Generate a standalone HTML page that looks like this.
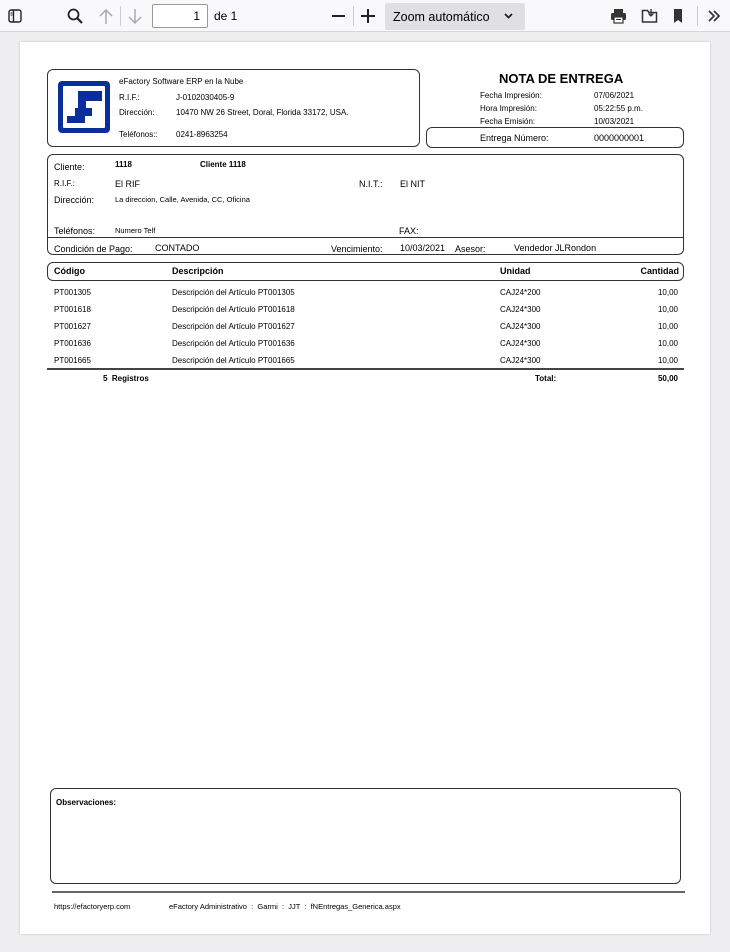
<!DOCTYPE html>
<html><head><meta charset="utf-8"><style>
*{margin:0;padding:0;box-sizing:border-box}
body{width:730px;height:952px;background:#eeeef0;font-family:"Liberation Sans",sans-serif;position:relative;overflow:hidden;color:#000}
.tb{position:absolute;left:0;top:0;width:730px;height:32px;background:#f9f9fb;border-bottom:1px solid #d6d6d8}
.a{position:absolute;white-space:nowrap}
.page{position:absolute;left:20px;top:42px;width:690px;height:892px;background:#fff;box-shadow:0 0 2px rgba(0,0,0,.2)}
.box{position:absolute;border:1.3px solid #333;border-radius:6px}
.s{font-size:8px}
.m{font-size:9px}
.b{font-weight:bold}
.r{text-align:right}
</style></head><body>
<div class="tb">
<svg class="a" style="left:8px;top:9px" width="14" height="14" viewBox="0 0 14 14"><rect x="1" y="1" width="12" height="12" rx="2" fill="none" stroke="#222" stroke-width="1.4"/><line x1="5.5" y1="1" x2="5.5" y2="13" stroke="#222" stroke-width="1.4"/><line x1="2.5" y1="4" x2="4.5" y2="4" stroke="#222"/><line x1="2.5" y1="6" x2="4.5" y2="6" stroke="#222"/></svg>
<svg class="a" style="left:67px;top:8px" width="17" height="17" viewBox="0 0 17 17"><circle cx="6.5" cy="6.5" r="5" fill="none" stroke="#222" stroke-width="1.8"/><line x1="10" y1="10" x2="15" y2="15" stroke="#222" stroke-width="2.2"/></svg>
<svg class="a" style="left:98px;top:8px" width="16" height="17" viewBox="0 0 16 17"><path d="M8 2v14M2 8l6-6 6 6" fill="none" stroke="#aaa" stroke-width="1.5"/></svg>
<div class="a" style="left:120px;top:6px;width:1px;height:20px;background:#ccc"></div>
<svg class="a" style="left:127px;top:8px" width="16" height="17" viewBox="0 0 16 17"><path d="M8 1v14M2 9l6 6 6-6" fill="none" stroke="#aaa" stroke-width="1.5"/></svg>
<div class="a" style="left:152px;top:4px;width:56px;height:24px;background:#fff;border:1px solid #999;border-radius:2px;font-size:12px;text-align:right;padding:4px 7px 0 0">1</div>
<div class="a" style="left:214px;top:9px;font-size:12px">de 1</div>
<div class="a" style="left:332px;top:15px;width:13px;height:2px;background:#222"></div>
<div class="a" style="left:353px;top:6px;width:1px;height:20px;background:#ccc"></div>
<div class="a" style="left:361px;top:15px;width:14px;height:2px;background:#222"></div>
<div class="a" style="left:367px;top:9px;width:2px;height:14px;background:#222"></div>
<div class="a" style="left:385px;top:3px;width:140px;height:27px;background:#e0e0e3;border-radius:2px;font-size:12.5px;padding:7px 0 0 8px">Zoom automático</div>
<svg class="a" style="left:504px;top:13px" width="9" height="7" viewBox="0 0 9 7"><path d="M1 1l3.5 3.5L8 1" fill="none" stroke="#222" stroke-width="1.8"/></svg>
<svg class="a" style="left:610px;top:8px" width="17" height="16" viewBox="0 0 17 16"><rect x="4" y="1" width="9" height="4" fill="#333"/><rect x="1" y="5" width="15" height="7" rx="1.5" fill="#333"/><rect x="4" y="9" width="9" height="6" fill="#fff" stroke="#333" stroke-width="1.2"/><line x1="6" y1="11.5" x2="11" y2="11.5" stroke="#333"/></svg>
<svg class="a" style="left:641px;top:7px" width="17" height="17" viewBox="0 0 17 17"><path d="M1.5 3.5h5l1.5 2h7.5v9.5h-14z" fill="none" stroke="#333" stroke-width="1.5"/><path d="M10 2v7M7.5 6.5l2.5 2.5 2.5-2.5" fill="none" stroke="#333" stroke-width="1.3"/></svg>
<svg class="a" style="left:673px;top:8px" width="10" height="16" viewBox="0 0 10 16"><path d="M1 1h8v14l-4-3-4 3z" fill="#333"/></svg>
<div class="a" style="left:697px;top:6px;width:1px;height:20px;background:#ccc"></div>
<svg class="a" style="left:707px;top:9px" width="14" height="14" viewBox="0 0 14 14"><path d="M2 2l5 5-5 5M7 2l5 5-5 5" fill="none" stroke="#333" stroke-width="1.7"/></svg>
</div>
<div class="page"></div>

<div class="box" style="left:47px;top:69px;width:373px;height:78px"></div>
<svg class="a" style="left:57px;top:80px" width="54" height="54" viewBox="0 0 54 54"><rect x="1" y="1" width="52" height="52" rx="4" fill="#0b2f9a"/><rect x="6" y="6" width="42" height="42" rx="1" fill="#fff"/><path d="M21 11h24v10H29v7h6v8H28v7H10v-7h8v-8h3z" fill="#0b2f9a"/></svg>
<div class="a s" style="left:119px;top:77px">eFactory Software ERP en la Nube</div>
<div class="a s" style="left:119px;top:93px">R.I.F.:</div><div class="a s" style="left:176px;top:93px">J-0102030405-9</div>
<div class="a s" style="left:119px;top:108px">Dirección:</div><div class="a s" style="left:176px;top:108px">10470 NW 26 Street, Doral, Florida 33172, USA.</div>
<div class="a s" style="left:119px;top:130px">Teléfonos::</div><div class="a s" style="left:176px;top:130px">0241-8963254</div>

<div class="a b" style="left:499px;top:71px;font-size:13px">NOTA DE ENTREGA</div>
<div class="a s" style="left:480px;top:91px">Fecha Impresión:</div><div class="a s" style="left:594px;top:91px">07/06/2021</div>
<div class="a s" style="left:480px;top:104px">Hora Impresión:</div><div class="a s" style="left:594px;top:104px">05:22:55 p.m.</div>
<div class="a s" style="left:480px;top:117px">Fecha Emisión:</div><div class="a s" style="left:594px;top:117px">10/03/2021</div>
<div class="box" style="left:426px;top:127px;width:258px;height:21px"></div>
<div class="a m" style="left:480px;top:133px">Entrega Número:</div><div class="a m" style="left:594px;top:133px">0000000001</div>

<div class="box" style="left:47px;top:154px;width:637px;height:101px"></div>
<div class="a" style="left:47px;top:237px;width:637px;height:1.3px;background:#333"></div>
<div class="a m" style="left:54px;top:162px">Cliente:</div>
<div class="a s b" style="left:115px;top:160px">1118</div><div class="a s b" style="left:200px;top:160px">Cliente 1118</div>
<div class="a s" style="left:54px;top:179px">R.I.F.:</div><div class="a m" style="left:115px;top:179px">El RIF</div>
<div class="a m" style="left:359px;top:179px">N.I.T.:</div><div class="a m" style="left:400px;top:179px">El NIT</div>
<div class="a m" style="left:54px;top:195px">Dirección:</div><div class="a" style="left:115px;top:195px;font-size:7.5px">La direccion, Calle, Avenida, CC, Oficina</div>
<div class="a m" style="left:54px;top:226px">Teléfonos:</div><div class="a" style="left:115px;top:226px;font-size:7.5px">Numero Telf</div>
<div class="a m" style="left:399px;top:226px">FAX:</div>
<div class="a m" style="left:54px;top:244px">Condición de Pago:</div><div class="a m" style="left:155px;top:243px">CONTADO</div>
<div class="a m" style="left:331px;top:244px">Vencimiento:</div><div class="a m" style="left:400px;top:243px">10/03/2021</div>
<div class="a m" style="left:455px;top:244px">Asesor:</div><div class="a m" style="left:514px;top:243px">Vendedor JLRondon</div>

<div class="box" style="left:47px;top:262px;width:637px;height:19px"></div>
<div class="a m b" style="left:54px;top:266px">Código</div>
<div class="a m b" style="left:172px;top:266px">Descripción</div>
<div class="a m b" style="left:500px;top:266px">Unidad</div>
<div class="a m b r" style="left:600px;top:266px;width:79px">Cantidad</div>

<div class="a s" style="left:54px;top:288px">PT001305</div><div class="a s" style="left:172px;top:288px">Descripción del Artículo PT001305</div><div class="a s" style="left:500px;top:288px">CAJ24*200</div><div class="a s r" style="left:600px;top:288px;width:78px">10,00</div>
<div class="a s" style="left:54px;top:305px">PT001618</div><div class="a s" style="left:172px;top:305px">Descripción del Artículo PT001618</div><div class="a s" style="left:500px;top:305px">CAJ24*300</div><div class="a s r" style="left:600px;top:305px;width:78px">10,00</div>
<div class="a s" style="left:54px;top:322px">PT001627</div><div class="a s" style="left:172px;top:322px">Descripción del Artículo PT001627</div><div class="a s" style="left:500px;top:322px">CAJ24*300</div><div class="a s r" style="left:600px;top:322px;width:78px">10,00</div>
<div class="a s" style="left:54px;top:339px">PT001636</div><div class="a s" style="left:172px;top:339px">Descripción del Artículo PT001636</div><div class="a s" style="left:500px;top:339px">CAJ24*300</div><div class="a s r" style="left:600px;top:339px;width:78px">10,00</div>
<div class="a s" style="left:54px;top:356px">PT001665</div><div class="a s" style="left:172px;top:356px">Descripción del Artículo PT001665</div><div class="a s" style="left:500px;top:356px">CAJ24*300</div><div class="a s r" style="left:600px;top:356px;width:78px">10,00</div>
<div class="a" style="left:47px;top:368px;width:637px;height:1.5px;background:#444"></div>
<div class="a s b" style="left:103px;top:374px">5 &nbsp;Registros</div>
<div class="a s b" style="left:535px;top:374px">Total:</div>
<div class="a s b r" style="left:600px;top:374px;width:78px">50,00</div>

<div class="box" style="left:50px;top:788px;width:631px;height:96px"></div>
<div class="a s b" style="left:56px;top:798px">Observaciones:</div>
<div class="a" style="left:52px;top:891px;width:633px;height:2px;background:#666"></div>
<div class="a" style="left:54px;top:902px;font-size:7.5px">https://efactoryerp.com</div>
<div class="a" style="left:169px;top:902px;font-size:7.5px">eFactory Administrativo &nbsp;: &nbsp;Garmi &nbsp;: &nbsp;JJT &nbsp;: &nbsp;fNEntregas_Generica.aspx</div>
</body></html>
